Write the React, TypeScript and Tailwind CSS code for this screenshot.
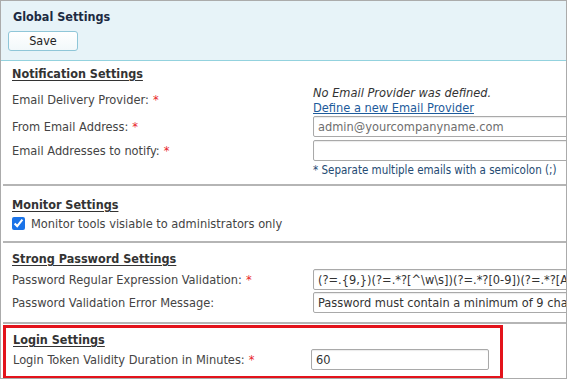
import React from 'react';

const font = { fontFamily: '"DejaVu Sans Condensed", "DejaVu Sans", Verdana, sans-serif' };

function Req() {
  return <span className="ml-1 text-[#e8262b]">*</span>;
}

function Field({ value, width = 'w-[270px]', placeholder }: { value?: string; width?: string; placeholder?: string }) {
  return (
    <input
      readOnly
      value={value}
      placeholder={placeholder}
      className={`h-[21px] ${width} shrink-0 rounded-[2px] border border-[#a9a9a9] bg-white px-[4px] text-[12.7px] text-[#333] placeholder:text-[#6e6e6e] outline-none shadow-[inset_0_1px_1px_rgba(0,0,0,0.08)]`}
    />
  );
}

function Heading({ children }: { children: React.ReactNode }) {
  return <div className="text-[12.5px] font-bold text-[#333] underline underline-offset-2">{children}</div>;
}

export default function App() {
  return (
    <div style={font} className="w-[567px] h-[379px] overflow-hidden border border-[#ababab] bg-white text-[12.7px] text-[#444]">
      <div className="h-[60px] border-b border-[#93d2de] bg-[#e7f3f8] px-[7px]">
        <div className="pl-[5px] pt-[8px] text-[12.5px] font-bold text-[#1c2a42] leading-[16px]">Global Settings</div>
        <button className="mt-[6px] h-[20px] w-[70px] rounded-[3px] border border-[#8fc6d8] bg-gradient-to-b from-white to-[#f2f8fa] text-[12.5px] text-[#222] leading-none">
          Save
        </button>
      </div>

      <div className="pl-[11px] pt-[4px] h-[123px]">
        <Heading>Notification Settings</Heading>
        <div className="grid grid-cols-[301px_1fr]">
          <div className="flex items-center">Email Delivery Provider:<Req /></div>
          <div className="pt-[1px] leading-[15px]">
            <div className="italic text-[#333]">No Email Provider was defined.</div>
            <div className="text-[#1d5b9b] underline">Define a new Email Provider</div>
          </div>
          <div className="flex h-[24px] items-center">From Email Address:<Req /></div>
          <div className="flex h-[24px] items-center"><Field placeholder="admin@yourcompanyname.com" /></div>
          <div className="flex h-[23px] items-center">Email Addresses to notify:<Req /></div>
          <div className="flex h-[23px] items-center"><Field /></div>
          <div />
          <div className="text-[11.5px] text-[#244a72]">* Separate multiple emails with a semicolon (;)</div>
        </div>
      </div>

      <div className="ml-[2px] h-[57px] border-t-2 border-[#b5b5b5] pl-[9px] pt-[10px]">
        <Heading>Monitor Settings</Heading>
        <label className="-mt-[1px] flex items-center gap-[6px]">
          <input type="checkbox" checked readOnly className="h-[13px] w-[13px] accent-[#1a73e8]" />
          <span>Monitor tools visiable to administrators only</span>
        </label>
      </div>

      <div className="ml-[2px] h-[81px] border-t-2 border-[#b5b5b5] pl-[9px] pt-[7px]">
        <Heading>Strong Password Settings</Heading>
        <div className="grid grid-cols-[301px_1fr]">
          <div className="flex h-[22px] items-center">Password Regular Expression Validation:<Req /></div>
          <div className="flex h-[22px] items-center"><Field width="w-[290px]" value={'(?=.{9,})(?=.*?[^\\w\\s])(?=.*?[0-9])(?=.*?[A-Z])'} /></div>
          <div className="flex h-[24px] items-center">Password Validation Error Message:</div>
          <div className="flex h-[24px] items-center"><Field width="w-[290px]" value="Password must contain a minimum of 9 characters" /></div>
        </div>
      </div>

      <div className="ml-[2px] border-t-2 border-[#b5b5b5] pt-[1px]">
        <div className="h-[54px] w-[500px] border-[3px] border-[#e3131b] pl-[7px] pt-[3px]">
          <Heading>Login Settings</Heading>
          <div className="grid grid-cols-[298px_1fr]">
            <div className="flex h-[20px] items-center">Login Token Validity Duration in Minutes:<Req /></div>
            <div className="flex h-[20px] items-center"><Field width="w-[178px]" value="60" /></div>
          </div>
        </div>
      </div>
    </div>
  );
}
